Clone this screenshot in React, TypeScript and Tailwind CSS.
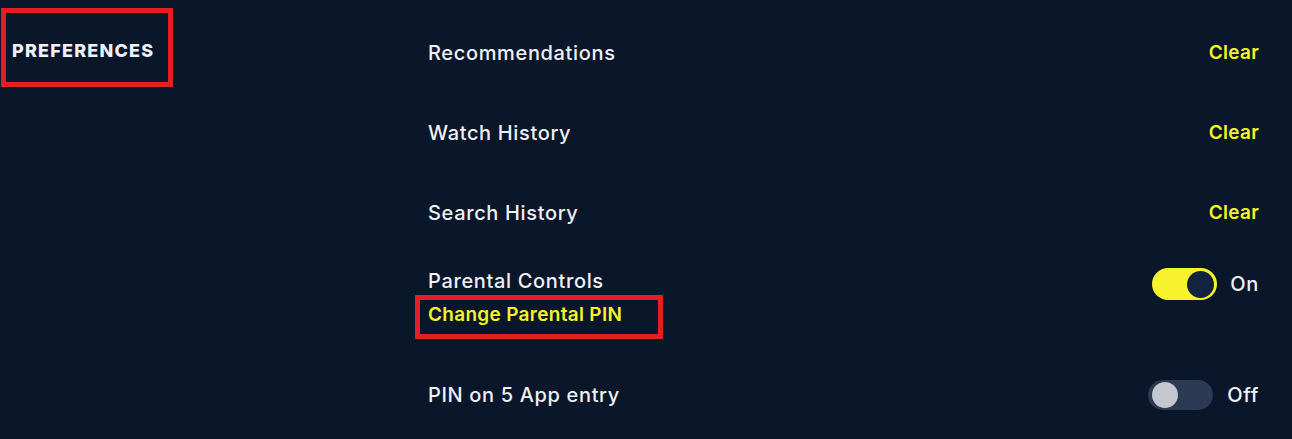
import React from "react";

const font = { fontFamily: "Inter, 'Noto Sans', sans-serif" };

const white = "text-[20px] leading-[24px] font-medium tracking-[0.65px] text-[#eef1f6]";
const yellow = "text-[19px] leading-[24px] font-semibold tracking-[0.3px] text-[#f7f22c]";

function Toggle({ on }: { on: boolean }) {
  return on ? (
    <div className="flex h-[32px] w-[65px] items-center justify-end rounded-full bg-[#f7f22c] pr-[3px]">
      <div className="h-[27px] w-[27px] rounded-full bg-[#13233f]" />
    </div>
  ) : (
    <div className="flex h-[30px] w-[65px] items-center justify-start rounded-full bg-[#2c3a54] pl-[4px]">
      <div className="h-[26px] w-[26px] rounded-full bg-[#c4c7ce]" />
    </div>
  );
}

function ClearRow({ label }: { label: string }) {
  return (
    <div className="flex h-[80px] items-center justify-between">
      <span className={white}>{label}</span>
      <span className={yellow}>Clear</span>
    </div>
  );
}

export default function App() {
  return (
    <div className="flex h-[439px] w-[1292px] bg-[#0a1629]" style={font}>
      <div className="w-[428px] shrink-0 pl-[1px] pt-[8px]">
        <div className="h-[79px] w-[172px] border-[5px] border-[#e31e24] pl-[6px] pt-[26px]">
          <span className="text-[18px] leading-[20px] font-extrabold tracking-[1.2px] text-[#eef1f6]">PREFERENCES</span>
        </div>
      </div>
      <div className="flex-1 pr-[33px] pt-[13px]">
        <ClearRow label="Recommendations" />
        <ClearRow label="Watch History" />
        <ClearRow label="Search History" />
        <div className="flex items-start justify-between pt-[16px]">
          <div className="flex flex-col">
            <span className={white}>Parental Controls</span>
            <div className="-ml-[13px] mt-[2px] w-[248px] border-[5px] border-[#e31e24] pl-[8px] pt-[3px] pb-[7px]">
              <span className={yellow}>Change Parental PIN</span>
            </div>
          </div>
          <div className="-mt-[1px] flex items-center gap-[13px]">
            <Toggle on />
            <span className={white}>On</span>
          </div>
        </div>
        <div className="mt-[40px] flex h-[32px] items-center justify-between">
          <span className={white}>PIN on 5 App entry</span>
          <div className="flex items-center gap-[14px]">
            <Toggle on={false} />
            <span className={white}>Off</span>
          </div>
        </div>
      </div>
    </div>
  );
}
